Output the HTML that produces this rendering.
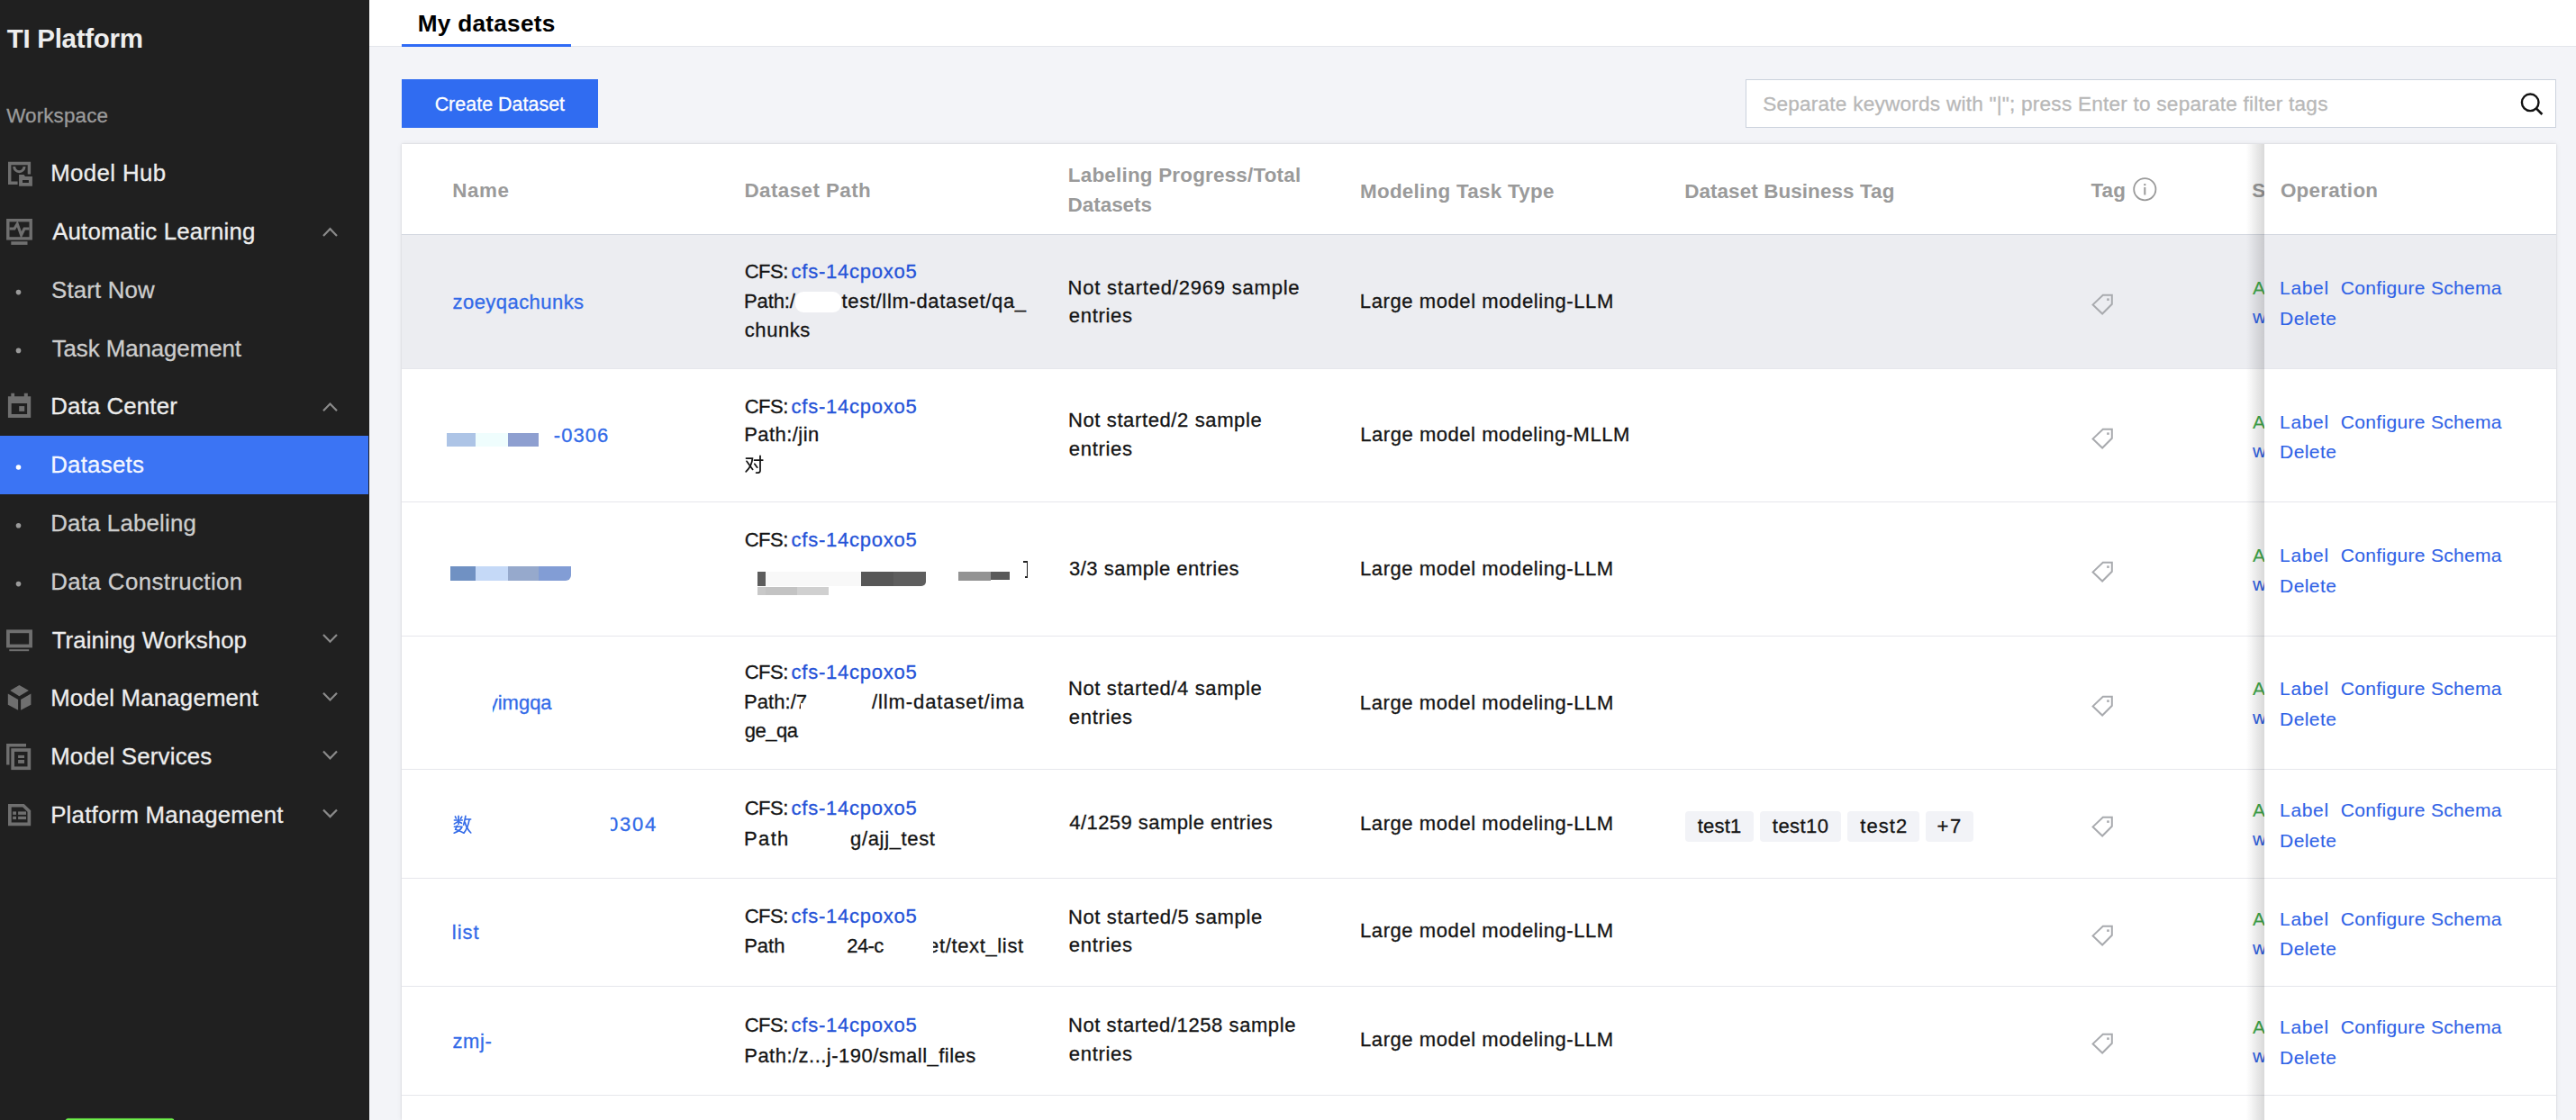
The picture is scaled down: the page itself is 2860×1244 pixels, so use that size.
<!DOCTYPE html>
<html><head><meta charset="utf-8"><style>
html,body{margin:0;padding:0;}
body{width:2860px;height:1244px;overflow:hidden;position:relative;background:#f3f4f8;font-family:"Liberation Sans",sans-serif;}
.t{position:absolute;white-space:nowrap;-webkit-text-stroke:0.3px currentColor;}
.r{position:absolute;}
</style></head><body>
<div class="r" style="left:0px;top:0px;width:410px;height:1244px;background:#202020;"></div>
<div class="t" style="left:7.7px;top:28px;font-size:29.5px;line-height:29.5px;color:#eeeeee;font-weight:bold;-webkit-text-stroke:0;letter-spacing:-0.277px;">TI Platform</div>
<div class="t" style="left:7.19px;top:118px;font-size:22.4px;line-height:22.4px;color:#9b9b9b;letter-spacing:0.145px;">Workspace</div>
<div class="t" style="left:56.14px;top:180px;font-size:25.8px;line-height:25.8px;color:#ededed;letter-spacing:0.407px;">Model Hub</div>
<div class="t" style="left:58.2px;top:245px;font-size:25.8px;line-height:25.8px;color:#ededed;letter-spacing:0.169px;">Automatic Learning</div>
<div class="t" style="left:57.04px;top:310px;font-size:25.8px;line-height:25.8px;color:#cdcdcd;letter-spacing:0.171px;">Start Now</div>
<div class="t" style="left:57.68px;top:375px;font-size:25.8px;line-height:25.8px;color:#cdcdcd;letter-spacing:-0.039px;">Task Management</div>
<div class="t" style="left:56.14px;top:439px;font-size:25.8px;line-height:25.8px;color:#ededed;letter-spacing:0.156px;">Data Center</div>
<div class="r" style="left:0px;top:484px;width:409px;height:65px;background:#3b74f4;"></div>
<div class="t" style="left:56.14px;top:504px;font-size:25.8px;line-height:25.8px;color:#f4f7ff;letter-spacing:0.284px;">Datasets</div>
<div class="t" style="left:56.14px;top:569px;font-size:25.8px;line-height:25.8px;color:#cdcdcd;letter-spacing:0.211px;">Data Labeling</div>
<div class="t" style="left:56.14px;top:634px;font-size:25.8px;line-height:25.8px;color:#cdcdcd;letter-spacing:0.411px;">Data Construction</div>
<div class="t" style="left:57.68px;top:699px;font-size:25.8px;line-height:25.8px;color:#ededed;letter-spacing:0.075px;">Training Workshop</div>
<div class="t" style="left:56.14px;top:763px;font-size:25.8px;line-height:25.8px;color:#ededed;letter-spacing:0.177px;">Model Management</div>
<div class="t" style="left:56.14px;top:828px;font-size:25.8px;line-height:25.8px;color:#ededed;letter-spacing:0.210px;">Model Services</div>
<div class="t" style="left:56.14px;top:893px;font-size:25.8px;line-height:25.8px;color:#ededed;letter-spacing:0.253px;">Platform Management</div>
<svg class="r" style="left:0;top:0" width="410" height="1244" viewBox="0 0 410 1244"><path d="M359 261.9 L366.5 254.2 L374 261.9" stroke="#8a8a8a" stroke-width="2.2" fill="none"/><circle cx="20.5" cy="324.6" r="2.8" fill="#9a9a9a"/><circle cx="20.5" cy="389.4" r="2.8" fill="#9a9a9a"/><path d="M359 456.3 L366.5 448.6 L374 456.3" stroke="#8a8a8a" stroke-width="2.2" fill="none"/><circle cx="20.5" cy="519.0" r="2.8" fill="#ffffff"/><circle cx="20.5" cy="583.8" r="2.8" fill="#9a9a9a"/><circle cx="20.5" cy="648.6" r="2.8" fill="#9a9a9a"/><path d="M359 705.0 L366.5 712.7 L374 705.0" stroke="#8a8a8a" stroke-width="2.2" fill="none"/><path d="M359 769.8 L366.5 777.5 L374 769.8" stroke="#8a8a8a" stroke-width="2.2" fill="none"/><path d="M359 834.6 L366.5 842.3 L374 834.6" stroke="#8a8a8a" stroke-width="2.2" fill="none"/><path d="M359 899.4 L366.5 907.1 L374 899.4" stroke="#8a8a8a" stroke-width="2.2" fill="none"/><path d="M32.4 193.6 V181.5 H10.7 V203.2 H19.6" stroke="#6f6f6f" stroke-width="3.4" fill="none"/><path d="M15.7 185 A5.65 5.65 0 0 0 27 185" stroke="#6f6f6f" stroke-width="3" fill="none"/><path fill-rule="evenodd" fill="#6f6f6f" d="M21.1 194.1 H26.5 L28 196 H35.9 V206.8 H21.1 Z M25 200 H31.9 V203 H25 Z"/><rect x="8.8" y="244.7" width="25.4" height="20.2" stroke="#6f6f6f" stroke-width="3.4" fill="none"/><rect x="12.3" y="268.2" width="18.2" height="3.7" fill="#6f6f6f"/><path d="M10.5 254 H16 L19.2 248.6 L23.6 261.2 L27 254 H32.5" stroke="#6f6f6f" stroke-width="3.1" fill="none"/><path fill-rule="evenodd" fill="#6f6f6f" d="M8.9 440.2 H12.3 V436.8 H16.1 V440.2 H26.8 V436.8 H30.8 V440.2 H34.2 V464.1 H8.9 Z M12.7 448 V460 H30.1 V448 Z"/><rect x="21.2" y="451.1" width="6" height="5.8" fill="#6f6f6f"/><rect x="8.95" y="701.3" width="25.1" height="16.2" stroke="#6f6f6f" stroke-width="3.8" fill="none"/><rect x="10.3" y="721.2" width="21.9" height="2" fill="#6f6f6f"/><path fill="#6f6f6f" d="M21.4 760.9 L31.9 767.1 L21.4 773.3 L11.3 767.1 Z M8.8 770.5 L20.1 776.9 V788.7 L8.8 782.8 Z M23.1 776.9 L34.4 770.5 V782.8 L23.1 788.7 Z"/><path d="M8.8 849.4 V827.8 H29" stroke="#6f6f6f" stroke-width="3.4" fill="none"/><rect x="14.15" y="833.05" width="18.2" height="20.2" stroke="#6f6f6f" stroke-width="3.7" fill="none"/><rect x="20.1" y="838.9" width="6.9" height="3.1" fill="#6f6f6f"/><rect x="20.1" y="844" width="6.9" height="3.9" fill="#6f6f6f"/><path d="M10.85 894.75 H26 L32.35 901 V915.35 H10.85 Z" stroke="#6f6f6f" stroke-width="3.7" fill="none"/><rect x="14.2" y="901.4" width="3.8" height="3.5" fill="#6f6f6f"/><rect x="14.2" y="906.8" width="3.8" height="3.3" fill="#6f6f6f"/><rect x="20.1" y="901.4" width="8.9" height="3.5" fill="#6f6f6f"/><rect x="20.1" y="906.8" width="8.9" height="3.3" fill="#6f6f6f"/><rect x="72.4" y="1241.8" width="121.5" height="6" rx="3" fill="#6ef04a" stroke="#1a1020" stroke-width="0.8"/></svg>
<div class="r" style="left:410px;top:0px;width:2450px;height:51px;background:#ffffff;"></div>
<div class="r" style="left:410px;top:50.5px;width:2450px;height:1.0px;background:#e4e6eb;"></div>
<div class="r" style="left:446px;top:49px;width:188px;height:3px;background:#2f6bf5;"></div>
<div class="t" style="left:463.7px;top:13px;font-size:26.2px;line-height:26.2px;color:#000000;font-weight:bold;-webkit-text-stroke:0;letter-spacing:0.276px;">My datasets</div>
<div class="r" style="left:446px;top:88px;width:218px;height:54px;background:#306cf1;"></div>
<div class="t" style="left:482.63px;top:106px;font-size:21.4px;line-height:21.4px;color:#ffffff;letter-spacing:0.043px;">Create Dataset</div>
<div class="r" style="left:1938px;top:88px;width:900px;height:54px;background:#ffffff;box-sizing:border-box;border:1px solid #cbd2dd;"></div>
<div class="t" style="left:1957.18px;top:105px;font-size:22.6px;line-height:22.6px;color:#b8b8b8;letter-spacing:0.224px;">Separate keywords with "|"; press Enter to separate filter tags</div>
<svg class="r" style="left:2790px;top:96px" width="40" height="40" viewBox="2790 96 40 40"><circle cx="2809.2" cy="113.8" r="9.3" stroke="#111" stroke-width="2.4" fill="none"/><path d="M2815.8 120.4 L2822.4 127" stroke="#111" stroke-width="2.6" fill="none"/></svg>
<div class="r" style="left:446px;top:160px;width:2392px;height:1084px;background:#ffffff;box-shadow:0 0 2px rgba(0,0,0,0.14), 0 0 6px rgba(0,0,0,0.07);"></div>
<div class="r" style="left:446px;top:260px;width:2392px;height:1px;background:#d3d8e0;"></div>
<div class="t" style="left:502.34px;top:201px;font-size:22.4px;line-height:22.4px;color:#9a9a9a;font-weight:bold;-webkit-text-stroke:0;letter-spacing:0.529px;">Name</div>
<div class="t" style="left:826.49px;top:201px;font-size:22.4px;line-height:22.4px;color:#9a9a9a;font-weight:bold;-webkit-text-stroke:0;letter-spacing:0.420px;">Dataset Path</div>
<div class="t" style="left:1185.84px;top:184px;font-size:22.4px;line-height:22.4px;color:#9a9a9a;font-weight:bold;-webkit-text-stroke:0;letter-spacing:0.225px;">Labeling Progress/Total</div>
<div class="t" style="left:1185.6px;top:217px;font-size:22.4px;line-height:22.4px;color:#9a9a9a;font-weight:bold;-webkit-text-stroke:0;">Datasets</div>
<div class="t" style="left:1510.04px;top:202px;font-size:22.4px;line-height:22.4px;color:#9a9a9a;font-weight:bold;-webkit-text-stroke:0;letter-spacing:0.273px;">Modeling Task Type</div>
<div class="t" style="left:1870.14px;top:202px;font-size:22.4px;line-height:22.4px;color:#9a9a9a;font-weight:bold;-webkit-text-stroke:0;letter-spacing:0.113px;">Dataset Business Tag</div>
<div class="t" style="left:2321.38px;top:201px;font-size:22.4px;line-height:22.4px;color:#9a9a9a;font-weight:bold;-webkit-text-stroke:0;letter-spacing:0.144px;">Tag</div>
<svg class="r" style="left:2366px;top:195px" width="31" height="31" viewBox="2366 195 31 31"><circle cx="2381.3" cy="210.2" r="12.1" stroke="#9a9a9a" stroke-width="1.8" fill="none"/><rect x="2380.3" y="204" width="2" height="2.2" fill="#9a9a9a"/><rect x="2380.3" y="208" width="2" height="8.5" fill="#9a9a9a"/></svg>
<div class="t" style="left:2500.2px;top:201px;font-size:22.4px;line-height:22.4px;color:#9a9a9a;font-weight:bold;-webkit-text-stroke:0;">S</div>
<div class="r" style="left:446px;top:261px;width:2392px;height:148px;background:#ecedf1;"></div>
<div class="r" style="left:446px;top:409px;width:2392px;height:1px;background:#e6e7ec;"></div>
<div class="r" style="left:446px;top:557px;width:2392px;height:1px;background:#e6e7ec;"></div>
<div class="r" style="left:446px;top:706px;width:2392px;height:1px;background:#e6e7ec;"></div>
<div class="r" style="left:446px;top:854px;width:2392px;height:1px;background:#e6e7ec;"></div>
<div class="r" style="left:446px;top:975px;width:2392px;height:1px;background:#e6e7ec;"></div>
<div class="r" style="left:446px;top:1095px;width:2392px;height:1px;background:#e6e7ec;"></div>
<div class="r" style="left:446px;top:1216px;width:2392px;height:1px;background:#e6e7ec;"></div>
<div class="t" style="left:502.52px;top:325px;font-size:22px;line-height:22px;color:#326ae8;letter-spacing:0.451px;">zoeyqachunks</div>
<div class="t" style="left:826.7px;top:291px;font-size:22px;line-height:22px;color:#141414;letter-spacing:-0.493px;">CFS:</div>
<div class="t" style="left:878.52px;top:291px;font-size:22px;line-height:22px;color:#2553d8;letter-spacing:0.752px;">cfs-14cpoxo5</div>
<div class="t" style="left:826.04px;top:324px;font-size:22px;line-height:22px;color:#141414;letter-spacing:-0.114px;">Path:/</div>
<div class="r" style="left:883.4px;top:324.2px;width:50.8px;height:23.1px;background:#ffffff;border-radius:9px;"></div>
<div class="t" style="left:934.47px;top:324px;font-size:22px;line-height:22px;color:#141414;letter-spacing:0.666px;">test/llm-dataset/qa_</div>
<div class="t" style="left:826.82px;top:356px;font-size:22px;line-height:22px;color:#141414;letter-spacing:0.542px;">chunks</div>
<div class="t" style="left:1185.54px;top:309px;font-size:22px;line-height:22px;color:#141414;letter-spacing:0.789px;">Not started/2969 sample</div>
<div class="t" style="left:1186.82px;top:340px;font-size:22px;line-height:22px;color:#141414;letter-spacing:0.675px;">entries</div>
<div class="t" style="left:1509.84px;top:324px;font-size:22px;line-height:22px;color:#141414;letter-spacing:0.590px;">Large model modeling-LLM</div>
<div class="r" style="left:496.1px;top:481.2px;width:31.7px;height:14.5px;background:#adc4e6;"></div>
<div class="r" style="left:527.8px;top:481.2px;width:36.1px;height:14.5px;background:#effdfd;"></div>
<div class="r" style="left:563.9px;top:481.2px;width:33.9px;height:14.5px;background:#8e9fd0;"></div>
<div class="t" style="left:614.81px;top:473px;font-size:22px;line-height:22px;color:#326ae8;letter-spacing:1.040px;">-0306</div>
<div class="t" style="left:826.7px;top:441px;font-size:22px;line-height:22px;color:#141414;letter-spacing:-0.493px;">CFS:</div>
<div class="t" style="left:878.52px;top:441px;font-size:22px;line-height:22px;color:#2553d8;letter-spacing:0.752px;">cfs-14cpoxo5</div>
<div class="t" style="left:826.14px;top:472px;font-size:22px;line-height:22px;color:#141414;letter-spacing:0.457px;">Path:/jin</div>
<svg class="r" style="left:824px;top:502px" width="28" height="28" viewBox="824 502 28 28"><g stroke="#141414" stroke-width="1.75" fill="none" stroke-linecap="round"><path d="M828.5 509.1 H835.4 Q834.8 517.5 828.2 523.9"/><path d="M829 512.3 L835.7 521.4"/><path d="M837.5 511.1 H846.8"/><path d="M844 506.3 V522.8 Q844 525 841.6 525 H839.6"/><path d="M837.8 515.3 L840.7 519.2"/></g></svg>
<div class="t" style="left:1185.94px;top:456px;font-size:22px;line-height:22px;color:#141414;letter-spacing:0.621px;">Not started/2 sample</div>
<div class="t" style="left:1186.82px;top:488px;font-size:22px;line-height:22px;color:#141414;letter-spacing:0.675px;">entries</div>
<div class="t" style="left:1510.34px;top:472px;font-size:22px;line-height:22px;color:#141414;letter-spacing:0.534px;">Large model modeling-MLLM</div>
<div class="r" style="left:500px;top:628.8px;width:27.8px;height:16.0px;background:#7091c3;"></div>
<div class="r" style="left:527.8px;top:628.8px;width:36.1px;height:16.0px;background:#c5d9f7;"></div>
<div class="r" style="left:563.9px;top:628.8px;width:33.9px;height:16.0px;background:#96a9cc;"></div>
<div class="r" style="left:597.8px;top:628.8px;width:35.9px;height:16.0px;background:#829dd5;border-bottom-right-radius:6px;"></div>
<div class="t" style="left:826.7px;top:589px;font-size:22px;line-height:22px;color:#141414;letter-spacing:-0.493px;">CFS:</div>
<div class="t" style="left:878.52px;top:589px;font-size:22px;line-height:22px;color:#2553d8;letter-spacing:0.752px;">cfs-14cpoxo5</div>
<div class="r" style="left:840.5px;top:635.4px;width:9.2px;height:16.1px;background:#5c5c5c;"></div>
<div class="r" style="left:849.7px;top:635.4px;width:106.3px;height:16.1px;background:#f8f8f8;"></div>
<div class="r" style="left:956px;top:635.4px;width:36px;height:16.1px;background:#575757;"></div>
<div class="r" style="left:992px;top:635.4px;width:35.9px;height:16.1px;background:#5e5e5e;border-bottom-right-radius:5px;"></div>
<div class="r" style="left:1064.2px;top:635.4px;width:35.6px;height:9.5px;background:#939393;"></div>
<div class="r" style="left:1099.8px;top:635.4px;width:21.2px;height:8.2px;background:#5a5a5a;"></div>
<div class="r" style="left:840.5px;top:652.1px;width:9.2px;height:9.3px;background:#c8c8c8;"></div>
<div class="r" style="left:849.7px;top:652.1px;width:35.3px;height:9.3px;background:#c3c3c3;"></div>
<div class="r" style="left:885px;top:652.1px;width:34.7px;height:9.3px;background:#d0d0d0;"></div>
<div class="r" style="left:1135.5px;top:623.1px;width:5.9px;height:1.7px;background:#222;"></div>
<div class="r" style="left:1139.6px;top:623.1px;width:1.8px;height:18.9px;background:#222;"></div>
<div class="r" style="left:1138px;top:640.3px;width:3.4px;height:1.7px;background:#222;"></div>
<div class="t" style="left:1186.93px;top:621px;font-size:22px;line-height:22px;color:#141414;letter-spacing:0.518px;">3/3 sample entries</div>
<div class="t" style="left:1510.04px;top:621px;font-size:22px;line-height:22px;color:#141414;letter-spacing:0.577px;">Large model modeling-LLM</div>
<div class="t" style="left:541.8px;top:770px;font-size:22px;line-height:22px;color:#326ae8;letter-spacing:-0.030px;">yimgqa</div>
<div class="r" style="left:536px;top:770px;width:11px;height:25px;background:#ffffff;"></div>
<div class="t" style="left:826.7px;top:736px;font-size:22px;line-height:22px;color:#141414;letter-spacing:-0.493px;">CFS:</div>
<div class="t" style="left:878.52px;top:736px;font-size:22px;line-height:22px;color:#2553d8;letter-spacing:0.752px;">cfs-14cpoxo5</div>
<div class="t" style="left:826.04px;top:769px;font-size:22px;line-height:22px;color:#141414;letter-spacing:0.053px;">Path:/7</div>
<div class="r" style="left:889px;top:781px;width:7px;height:14px;background:#ffffff;"></div>
<div class="t" style="left:962.9px;top:769px;font-size:22px;line-height:22px;color:#141414;letter-spacing:0.900px;">'/llm-dataset/ima</div>
<div class="r" style="left:960px;top:770px;width:8.5px;height:10px;background:#ffffff;"></div>
<div class="t" style="left:826.82px;top:801px;font-size:22px;line-height:22px;color:#141414;letter-spacing:-0.495px;">ge_qa</div>
<div class="t" style="left:1185.94px;top:754px;font-size:22px;line-height:22px;color:#141414;letter-spacing:0.621px;">Not started/4 sample</div>
<div class="t" style="left:1186.82px;top:786px;font-size:22px;line-height:22px;color:#141414;letter-spacing:0.675px;">entries</div>
<div class="t" style="left:1509.84px;top:770px;font-size:22px;line-height:22px;color:#141414;letter-spacing:0.590px;">Large model modeling-LLM</div>
<svg class="r" style="left:500px;top:902px" width="28" height="28" viewBox="500 902 28 28"><g stroke="#326ae8" stroke-width="1.65" fill="none" stroke-linecap="round" stroke-linejoin="round"><path d="M505.4 906.9 L506.4 909"/><path d="M509.1 906.4 V915.6"/><path d="M512.8 907.1 L511.5 909.2"/><path d="M504.4 911 H513.3"/><path d="M508.3 912.6 L504.3 915.1"/><path d="M510.2 913 L512.5 914.3"/><path d="M504.4 918.2 H513 Q511.5 922.5 504.2 925.2"/><path d="M507.6 917.2 L505.6 921.3 Q510 922.5 515 925.2"/><path d="M516.9 906.4 Q516 912 514.6 916.3"/><path d="M516.6 910 H522.7"/><path d="M521 910.6 Q519.5 919.5 515 925.2"/><path d="M516.3 913.5 Q518 920.5 522.8 925"/></g></svg>
<div class="r" style="left:519px;top:895px;width:11px;height:10px;background:#ffffff;"></div>
<div class="t" style="left:674.12px;top:905px;font-size:22px;line-height:22px;color:#326ae8;letter-spacing:1.760px;">0304</div>
<div class="r" style="left:670px;top:895px;width:8px;height:40px;background:#ffffff;"></div>
<div class="t" style="left:826.7px;top:887px;font-size:22px;line-height:22px;color:#141414;letter-spacing:-0.493px;">CFS:</div>
<div class="t" style="left:878.52px;top:887px;font-size:22px;line-height:22px;color:#2553d8;letter-spacing:0.752px;">cfs-14cpoxo5</div>
<div class="t" style="left:826.04px;top:921px;font-size:22px;line-height:22px;color:#141414;letter-spacing:1.357px;">Path</div>
<div class="t" style="left:944.12px;top:921px;font-size:22px;line-height:22px;color:#141414;letter-spacing:0.643px;">g/ajj_test</div>
<div class="r" style="left:940px;top:920px;width:9px;height:8px;background:#ffffff;"></div>
<div class="t" style="left:1187.26px;top:903px;font-size:22px;line-height:22px;color:#141414;letter-spacing:0.447px;">4/1259 sample entries</div>
<div class="t" style="left:1510.04px;top:904px;font-size:22px;line-height:22px;color:#141414;letter-spacing:0.577px;">Large model modeling-LLM</div>
<div class="r" style="left:1871.2px;top:901.2px;width:75.7px;height:34.3px;background:#f2f3f7;border-radius:4px;"></div>
<div class="t" style="left:1884.77px;top:907px;font-size:22px;line-height:22px;color:#141414;letter-spacing:0.223px;">test1</div>
<div class="r" style="left:1954.1px;top:901.2px;width:89.8px;height:34.3px;background:#f2f3f7;border-radius:4px;"></div>
<div class="t" style="left:1967.87px;top:907px;font-size:22px;line-height:22px;color:#141414;letter-spacing:0.430px;">test10</div>
<div class="r" style="left:2051.1px;top:901.2px;width:79.8px;height:34.3px;background:#f2f3f7;border-radius:4px;"></div>
<div class="t" style="left:2065.27px;top:907px;font-size:22px;line-height:22px;color:#141414;letter-spacing:1.075px;">test2</div>
<div class="r" style="left:2138.1px;top:901.2px;width:52.6px;height:34.3px;background:#f2f3f7;border-radius:4px;"></div>
<div class="t" style="left:2150.6px;top:907px;font-size:22px;line-height:22px;color:#141414;letter-spacing:1.520px;">+7</div>
<div class="t" style="left:501.87px;top:1025px;font-size:22px;line-height:22px;color:#326ae8;letter-spacing:0.967px;">list</div>
<div class="t" style="left:826.7px;top:1007px;font-size:22px;line-height:22px;color:#141414;letter-spacing:-0.493px;">CFS:</div>
<div class="t" style="left:878.52px;top:1007px;font-size:22px;line-height:22px;color:#2553d8;letter-spacing:0.752px;">cfs-14cpoxo5</div>
<div class="t" style="left:826.24px;top:1040px;font-size:22px;line-height:22px;color:#141414;letter-spacing:-0.043px;">Path</div>
<div class="t" style="left:940.3px;top:1040px;font-size:22px;line-height:22px;color:#141414;letter-spacing:-0.613px;">24-c</div>
<div class="t" style="left:1030.12px;top:1040px;font-size:22px;line-height:22px;color:#141414;letter-spacing:0.635px;">et/text_list</div>
<div class="r" style="left:1028px;top:1040px;width:7.5px;height:22px;background:#ffffff;"></div>
<div class="t" style="left:1185.94px;top:1008px;font-size:22px;line-height:22px;color:#141414;letter-spacing:0.647px;">Not started/5 sample</div>
<div class="t" style="left:1186.82px;top:1039px;font-size:22px;line-height:22px;color:#141414;letter-spacing:0.675px;">entries</div>
<div class="t" style="left:1510.04px;top:1023px;font-size:22px;line-height:22px;color:#141414;letter-spacing:0.577px;">Large model modeling-LLM</div>
<div class="t" style="left:502.42px;top:1146px;font-size:22px;line-height:22px;color:#326ae8;letter-spacing:0.663px;">zmj-</div>
<div class="t" style="left:826.7px;top:1128px;font-size:22px;line-height:22px;color:#141414;letter-spacing:-0.493px;">CFS:</div>
<div class="t" style="left:878.52px;top:1128px;font-size:22px;line-height:22px;color:#2553d8;letter-spacing:0.752px;">cfs-14cpoxo5</div>
<div class="t" style="left:826.24px;top:1162px;font-size:22px;line-height:22px;color:#141414;letter-spacing:0.481px;">Path:/z...j-190/small_files</div>
<div class="t" style="left:1185.94px;top:1128px;font-size:22px;line-height:22px;color:#141414;letter-spacing:0.580px;">Not started/1258 sample</div>
<div class="t" style="left:1186.82px;top:1160px;font-size:22px;line-height:22px;color:#141414;letter-spacing:0.675px;">entries</div>
<div class="t" style="left:1510.04px;top:1144px;font-size:22px;line-height:22px;color:#141414;letter-spacing:0.577px;">Large model modeling-LLM</div>
<svg class="r" style="left:2318px;top:322.0px" width="32" height="32" viewBox="2318 322.0 32 32"><path d="M2334.8 327.7 H2344.8 V337.8 L2334.1 348.5 L2323.6 338.4 Z" stroke="#a8aaae" stroke-width="2" fill="none"/><rect x="2339.2" y="331.4" width="2.5" height="2.5" fill="#a8aaae"/></svg>
<svg class="r" style="left:2318px;top:470.5px" width="32" height="32" viewBox="2318 470.5 32 32"><path d="M2334.8 476.2 H2344.8 V486.3 L2334.1 497.0 L2323.6 486.9 Z" stroke="#a8aaae" stroke-width="2" fill="none"/><rect x="2339.2" y="479.9" width="2.5" height="2.5" fill="#a8aaae"/></svg>
<svg class="r" style="left:2318px;top:619.0px" width="32" height="32" viewBox="2318 619.0 32 32"><path d="M2334.8 624.7 H2344.8 V634.8 L2334.1 645.5 L2323.6 635.4 Z" stroke="#a8aaae" stroke-width="2" fill="none"/><rect x="2339.2" y="628.4" width="2.5" height="2.5" fill="#a8aaae"/></svg>
<svg class="r" style="left:2318px;top:767.5px" width="32" height="32" viewBox="2318 767.5 32 32"><path d="M2334.8 773.2 H2344.8 V783.3 L2334.1 794.0 L2323.6 783.9 Z" stroke="#a8aaae" stroke-width="2" fill="none"/><rect x="2339.2" y="776.9" width="2.5" height="2.5" fill="#a8aaae"/></svg>
<svg class="r" style="left:2318px;top:902.0px" width="32" height="32" viewBox="2318 902.0 32 32"><path d="M2334.8 907.7 H2344.8 V917.8 L2334.1 928.5 L2323.6 918.4 Z" stroke="#a8aaae" stroke-width="2" fill="none"/><rect x="2339.2" y="911.4" width="2.5" height="2.5" fill="#a8aaae"/></svg>
<svg class="r" style="left:2318px;top:1022.5px" width="32" height="32" viewBox="2318 1022.5 32 32"><path d="M2334.8 1028.2 H2344.8 V1038.3 L2334.1 1049.0 L2323.6 1038.9 Z" stroke="#a8aaae" stroke-width="2" fill="none"/><rect x="2339.2" y="1031.9" width="2.5" height="2.5" fill="#a8aaae"/></svg>
<svg class="r" style="left:2318px;top:1143.0px" width="32" height="32" viewBox="2318 1143.0 32 32"><path d="M2334.8 1148.7 H2344.8 V1158.8 L2334.1 1169.5 L2323.6 1159.4 Z" stroke="#a8aaae" stroke-width="2" fill="none"/><rect x="2339.2" y="1152.4" width="2.5" height="2.5" fill="#a8aaae"/></svg>
<div class="t" style="left:2501.1px;top:309px;font-size:21px;line-height:21px;color:#41a94a;-webkit-text-stroke:0.1px currentColor;">A</div>
<div class="t" style="left:2501.1px;top:341px;font-size:21px;line-height:21px;color:#2f62e6;-webkit-text-stroke:0.1px currentColor;">w</div>
<div class="t" style="left:2501.1px;top:458px;font-size:21px;line-height:21px;color:#41a94a;-webkit-text-stroke:0.1px currentColor;">A</div>
<div class="t" style="left:2501.1px;top:490px;font-size:21px;line-height:21px;color:#2f62e6;-webkit-text-stroke:0.1px currentColor;">w</div>
<div class="t" style="left:2501.1px;top:606px;font-size:21px;line-height:21px;color:#41a94a;-webkit-text-stroke:0.1px currentColor;">A</div>
<div class="t" style="left:2501.1px;top:638px;font-size:21px;line-height:21px;color:#2f62e6;-webkit-text-stroke:0.1px currentColor;">w</div>
<div class="t" style="left:2501.1px;top:754px;font-size:21px;line-height:21px;color:#41a94a;-webkit-text-stroke:0.1px currentColor;">A</div>
<div class="t" style="left:2501.1px;top:786px;font-size:21px;line-height:21px;color:#2f62e6;-webkit-text-stroke:0.1px currentColor;">w</div>
<div class="t" style="left:2501.1px;top:889px;font-size:21px;line-height:21px;color:#41a94a;-webkit-text-stroke:0.1px currentColor;">A</div>
<div class="t" style="left:2501.1px;top:921px;font-size:21px;line-height:21px;color:#2f62e6;-webkit-text-stroke:0.1px currentColor;">w</div>
<div class="t" style="left:2501.1px;top:1010px;font-size:21px;line-height:21px;color:#41a94a;-webkit-text-stroke:0.1px currentColor;">A</div>
<div class="t" style="left:2501.1px;top:1042px;font-size:21px;line-height:21px;color:#2f62e6;-webkit-text-stroke:0.1px currentColor;">w</div>
<div class="t" style="left:2501.1px;top:1130px;font-size:21px;line-height:21px;color:#41a94a;-webkit-text-stroke:0.1px currentColor;">A</div>
<div class="t" style="left:2501.1px;top:1162px;font-size:21px;line-height:21px;color:#2f62e6;-webkit-text-stroke:0.1px currentColor;">w</div>
<div class="r" style="left:2494px;top:160px;width:20px;height:1084px;background:transparent;background:linear-gradient(to right, rgba(0,0,0,0), rgba(0,0,0,0.15));"></div>
<div class="r" style="left:2514px;top:160px;width:324px;height:100px;background:#ffffff;"></div>
<div class="r" style="left:2514px;top:260px;width:324px;height:1px;background:#d3d8e0;"></div>
<div class="t" style="left:2531.9px;top:201px;font-size:22.4px;line-height:22.4px;color:#9a9a9a;font-weight:bold;-webkit-text-stroke:0;letter-spacing:0.301px;">Operation</div>
<div class="r" style="left:2514px;top:261px;width:324px;height:148px;background:#ecedf1;"></div>
<div class="r" style="left:2514px;top:409px;width:324px;height:1px;background:#e6e7ec;"></div>
<div class="t" style="left:2531.12px;top:309px;font-size:21px;line-height:21px;color:#2f62e6;-webkit-text-stroke:0.1px currentColor;letter-spacing:0.650px;">Label</div>
<div class="t" style="left:2598.85px;top:309px;font-size:21px;line-height:21px;color:#2f62e6;-webkit-text-stroke:0.1px currentColor;letter-spacing:0.318px;">Configure Schema</div>
<div class="t" style="left:2531.12px;top:343px;font-size:21px;line-height:21px;color:#2f62e6;-webkit-text-stroke:0.1px currentColor;letter-spacing:0.406px;">Delete</div>
<div class="r" style="left:2514px;top:410px;width:324px;height:147px;background:#ffffff;"></div>
<div class="r" style="left:2514px;top:557px;width:324px;height:1px;background:#e6e7ec;"></div>
<div class="t" style="left:2531.12px;top:458px;font-size:21px;line-height:21px;color:#2f62e6;-webkit-text-stroke:0.1px currentColor;letter-spacing:0.650px;">Label</div>
<div class="t" style="left:2598.85px;top:458px;font-size:21px;line-height:21px;color:#2f62e6;-webkit-text-stroke:0.1px currentColor;letter-spacing:0.318px;">Configure Schema</div>
<div class="t" style="left:2531.12px;top:491px;font-size:21px;line-height:21px;color:#2f62e6;-webkit-text-stroke:0.1px currentColor;letter-spacing:0.406px;">Delete</div>
<div class="r" style="left:2514px;top:558px;width:324px;height:148px;background:#ffffff;"></div>
<div class="r" style="left:2514px;top:706px;width:324px;height:1px;background:#e6e7ec;"></div>
<div class="t" style="left:2531.12px;top:606px;font-size:21px;line-height:21px;color:#2f62e6;-webkit-text-stroke:0.1px currentColor;letter-spacing:0.650px;">Label</div>
<div class="t" style="left:2598.85px;top:606px;font-size:21px;line-height:21px;color:#2f62e6;-webkit-text-stroke:0.1px currentColor;letter-spacing:0.318px;">Configure Schema</div>
<div class="t" style="left:2531.12px;top:640px;font-size:21px;line-height:21px;color:#2f62e6;-webkit-text-stroke:0.1px currentColor;letter-spacing:0.406px;">Delete</div>
<div class="r" style="left:2514px;top:707px;width:324px;height:147px;background:#ffffff;"></div>
<div class="r" style="left:2514px;top:854px;width:324px;height:1px;background:#e6e7ec;"></div>
<div class="t" style="left:2531.12px;top:754px;font-size:21px;line-height:21px;color:#2f62e6;-webkit-text-stroke:0.1px currentColor;letter-spacing:0.650px;">Label</div>
<div class="t" style="left:2598.85px;top:754px;font-size:21px;line-height:21px;color:#2f62e6;-webkit-text-stroke:0.1px currentColor;letter-spacing:0.318px;">Configure Schema</div>
<div class="t" style="left:2531.12px;top:788px;font-size:21px;line-height:21px;color:#2f62e6;-webkit-text-stroke:0.1px currentColor;letter-spacing:0.406px;">Delete</div>
<div class="r" style="left:2514px;top:855px;width:324px;height:120px;background:#ffffff;"></div>
<div class="r" style="left:2514px;top:975px;width:324px;height:1px;background:#e6e7ec;"></div>
<div class="t" style="left:2531.12px;top:889px;font-size:21px;line-height:21px;color:#2f62e6;-webkit-text-stroke:0.1px currentColor;letter-spacing:0.650px;">Label</div>
<div class="t" style="left:2598.85px;top:889px;font-size:21px;line-height:21px;color:#2f62e6;-webkit-text-stroke:0.1px currentColor;letter-spacing:0.318px;">Configure Schema</div>
<div class="t" style="left:2531.12px;top:923px;font-size:21px;line-height:21px;color:#2f62e6;-webkit-text-stroke:0.1px currentColor;letter-spacing:0.406px;">Delete</div>
<div class="r" style="left:2514px;top:976px;width:324px;height:119px;background:#ffffff;"></div>
<div class="r" style="left:2514px;top:1095px;width:324px;height:1px;background:#e6e7ec;"></div>
<div class="t" style="left:2531.12px;top:1010px;font-size:21px;line-height:21px;color:#2f62e6;-webkit-text-stroke:0.1px currentColor;letter-spacing:0.650px;">Label</div>
<div class="t" style="left:2598.85px;top:1010px;font-size:21px;line-height:21px;color:#2f62e6;-webkit-text-stroke:0.1px currentColor;letter-spacing:0.318px;">Configure Schema</div>
<div class="t" style="left:2531.12px;top:1043px;font-size:21px;line-height:21px;color:#2f62e6;-webkit-text-stroke:0.1px currentColor;letter-spacing:0.406px;">Delete</div>
<div class="r" style="left:2514px;top:1096px;width:324px;height:120px;background:#ffffff;"></div>
<div class="r" style="left:2514px;top:1216px;width:324px;height:1px;background:#e6e7ec;"></div>
<div class="t" style="left:2531.12px;top:1130px;font-size:21px;line-height:21px;color:#2f62e6;-webkit-text-stroke:0.1px currentColor;letter-spacing:0.650px;">Label</div>
<div class="t" style="left:2598.85px;top:1130px;font-size:21px;line-height:21px;color:#2f62e6;-webkit-text-stroke:0.1px currentColor;letter-spacing:0.318px;">Configure Schema</div>
<div class="t" style="left:2531.12px;top:1164px;font-size:21px;line-height:21px;color:#2f62e6;-webkit-text-stroke:0.1px currentColor;letter-spacing:0.406px;">Delete</div>
<div class="r" style="left:2514px;top:1217px;width:324px;height:27px;background:#ffffff;"></div>
</body></html>
